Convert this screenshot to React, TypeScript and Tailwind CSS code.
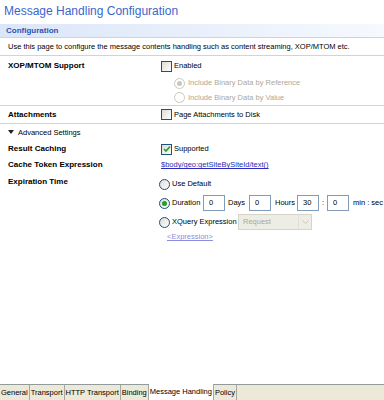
const Checkbox = ({ checked = false }: { checked?: boolean }) => (
  <span className="flex h-[11px] w-[11px] shrink-0 items-center justify-center border border-[#1c5180] bg-gradient-to-br from-[#dcdcd7] to-white">
    {checked && (
      <svg width="8" height="8" viewBox="0 0 8 8">
        <path d="M1 4 L3 6 L7 1.5" fill="none" stroke="#21a121" strokeWidth="1.6" />
      </svg>
    )}
  </span>
);

const Radio = ({ checked = false, disabled = false }: { checked?: boolean; disabled?: boolean }) => (
  <span
    className={`flex h-[11px] w-[11px] shrink-0 items-center justify-center rounded-full border ${
      disabled ? "border-[#cac8bb] bg-white" : "border-[#1c5180] bg-gradient-to-br from-[#dcdcd7] to-white"
    }`}
  >
    {checked && (
      <span className={`h-[5px] w-[5px] rounded-full ${disabled ? "bg-[#cac8bb]" : "bg-[#21a121]"}`} />
    )}
  </span>
);

const Box = ({ value }: { value: string }) => (
  <span className="flex h-[16px] w-[22px] shrink-0 items-center border border-[#7f9db9] bg-white pl-[5px] text-black">{value}</span>
);

const Row = ({ label, children, h = "h-[16px]" }: { label?: string; children?: React.ReactNode; h?: string }) => (
  <div className={`flex ${h} items-center`}>
    <div className="w-[161px] shrink-0 pl-[8px] text-[8px] font-bold text-black">{label}</div>
    <div className="flex items-center gap-[2px]">{children}</div>
  </div>
);

const tabs = ["General", "Transport", "HTTP Transport", "Binding", "Message Handling", "Policy"];

export default function App() {
  return (
    <div className="flex h-[400px] w-[384px] flex-col bg-white font-['Liberation_Sans',Arial,sans-serif] text-[7.5px] text-black">
      <div className="flex-1">
        <div className="flex h-[22px] items-center pl-[4px] text-[12px] text-[#3a66cc]">Message Handling Configuration</div>

        <div className="mt-[2px] flex h-[14px] items-center border-b border-[#c5d5f0] bg-gradient-to-r from-[#dbe6f8] to-[#f6f9fe] pl-[6px] text-[8px] font-bold text-[#2a53b5]">
          Configuration
        </div>

        <div className="flex h-[17px] items-center pl-[8px]">
          Use this page to configure the message contents handling such as content streaming, XOP/MTOM etc.
        </div>
        <div className="border-t border-[#d6d3c8]" />

        <Row label="XOP/MTOM Support" h="h-[20px]">
          <Checkbox />
          <span>Enabled</span>
        </Row>
        <div className="flex h-[14px] items-center gap-[3px] pl-[174px] text-[#aca899]">
          <Radio checked disabled />
          <span>Include Binary Data by Reference</span>
        </div>
        <div className="flex h-[15px] items-center gap-[3px] pl-[174px] text-[#aca899]">
          <Radio disabled />
          <span>Include Binary Data by Value</span>
        </div>
        <div className="border-t border-[#d6d3c8]" />

        <Row label="Attachments" h="h-[17px]">
          <Checkbox />
          <span>Page Attachments to Disk</span>
        </Row>
        <div className="border-t border-[#d6d3c8]" />

        <div className="flex h-[17px] items-center gap-[4px] pl-[8px]">
          <svg width="6" height="5" viewBox="0 0 6 5">
            <path d="M0 0 L6 0 L3 4 Z" fill="#222" />
          </svg>
          <span>Advanced Settings</span>
        </div>

        <Row label="Result Caching" h="h-[16px]">
          <Checkbox checked />
          <span>Supported</span>
        </Row>
        <Row label="Cache Token Expression" h="h-[16px]">
          <span className="text-[#2a2ab8] underline">$body/geo:getSiteBySiteId/text()</span>
        </Row>

        <div className="flex">
          <div className="w-[153px] shrink-0 pl-[8px] pt-[3px] text-[8px] font-bold">Expiration Time</div>
          <div className="flex flex-col whitespace-nowrap pl-[6px] pt-[4px]">
            <div className="flex h-[14px] items-center gap-[2px]">
              <Radio />
              <span>Use Default</span>
            </div>
            <div className="mt-[3px] flex h-[18px] items-center">
              <Radio checked />
              <span className="ml-[2px] w-[31px]">Duration</span>
              <Box value="0" />
              <span className="ml-[3px] w-[21px]">Days</span>
              <Box value="0" />
              <span className="ml-[4px] w-[22px]">Hours</span>
              <Box value="30" />
              <span className="w-[8px] text-center">:</span>
              <Box value="0" />
              <span className="ml-[4px]">min : sec</span>
            </div>
            <div className="mt-[1px] flex h-[18px] items-center">
              <Radio />
              <span className="ml-[2px] w-[66px]">XQuery Expression</span>
              <span className="flex h-[16px] w-[74px] items-center justify-between border border-[#d6d4c6] bg-[#eeede5] pl-[4px] text-[#aca899]">
                Request
                <span className="flex h-[14px] w-[13px] items-center justify-center border-l border-[#e2e0d6]">
                  <svg width="7" height="4" viewBox="0 0 7 4">
                    <path d="M0.5 0.5 L3.5 3.5 L6.5 0.5" fill="none" stroke="#c9c7ba" strokeWidth="1" />
                  </svg>
                </span>
              </span>
            </div>
            <div className="flex h-[12px] items-center pl-[8px] text-[#8c8ce0] underline">&lt;Expression&gt;</div>
          </div>
        </div>
      </div>

      <div className="flex h-[16px] border-t border-[#919b9c] bg-[#ece9d8] text-[7.5px]">
        {tabs.map((t) => (
          <div
            key={t}
            className={`flex items-center border-r border-[#aca899] px-[1px] ${
              t === "Message Handling" ? "-mt-px bg-white" : ""
            }`}
          >
            {t}
          </div>
        ))}
      </div>
    </div>
  );
}
